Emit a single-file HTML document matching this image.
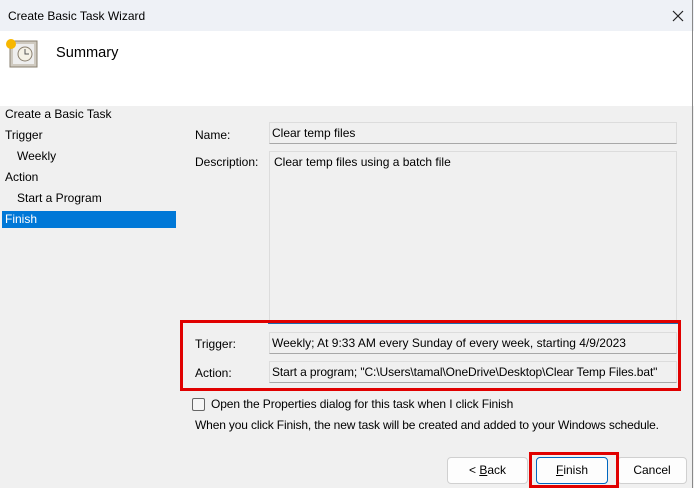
<!DOCTYPE html>
<html><head><style>
*{margin:0;padding:0;box-sizing:border-box}
body{width:694px;height:488px;overflow:hidden;background:#f0f0f0;font-family:"Liberation Sans",sans-serif;font-size:12px;color:#000;position:relative}
.a{position:absolute;white-space:nowrap}
.fld{position:absolute;background:#f0f0f0;border:1px solid #dcdcdc;border-bottom-color:#a8a8a8;padding:3px 2px;}
.btn{position:absolute;height:27px;background:#fdfdfd;border:1px solid #d0d0d0;border-radius:4px;text-align:center;line-height:25px}
</style></head><body>
<div class="a" style="left:0;top:0;width:694px;height:31px;background:#eef1f6"></div>
<div class="a" style="left:8px;top:9px;font-size:12px">Create Basic Task Wizard</div>
<svg class="a" style="left:671px;top:9px" width="14" height="14"><path d="M2 2L12 12M12 2L2 12" stroke="#222" stroke-width="1.2"/></svg>
<div class="a" style="left:0;top:31px;width:694px;height:75px;background:#fff"></div>
<svg class="a" style="left:4px;top:36px" width="34" height="34">
<rect x="6" y="5" width="27" height="26" fill="#cfcac0" stroke="#8a8070"/>
<rect x="9" y="8" width="21" height="20" fill="#eee" />
<circle cx="21" cy="18" r="7" fill="#f4f1e6" stroke="#8a8070"/>
<path d="M21 13v5h4" stroke="#555" fill="none"/>
<circle cx="7" cy="8" r="5" fill="#f7b700"/>
</svg>
<div class="a" style="left:56px;top:45px;font-size:14.6px">Summary</div>
<div class="a" style="left:692px;top:0;width:1px;height:488px;background:#888"></div>
<div class="a" style="left:5px;top:107px">Create a Basic Task</div>
<div class="a" style="left:5px;top:128px">Trigger</div>
<div class="a" style="left:17px;top:149px">Weekly</div>
<div class="a" style="left:5px;top:170px">Action</div>
<div class="a" style="left:17px;top:191px">Start a Program</div>
<div class="a" style="left:2px;top:211px;width:174px;height:17px;background:#0078d7"></div>
<div class="a" style="left:5px;top:212px;color:#fff">Finish</div>
<div class="a" style="left:195px;top:128px">Name:</div>
<div class="fld" style="left:269px;top:122px;width:408px;height:22px">Clear temp files</div>
<div class="a" style="left:195px;top:155px">Description:</div>
<div class="a" style="left:269px;top:151px;width:408px;height:172px;border:1px solid #dcdcdc;border-bottom:none;padding:3px 4px">Clear temp files using a batch file</div>
<div class="a" style="left:268px;top:322px;width:410px;height:2px;background:#1a6bb0"></div>
<div class="a" style="left:195px;top:337px">Trigger:</div>
<div class="fld" style="left:269px;top:332px;width:408px;height:22px">Weekly; At 9:33 AM every Sunday of every week, starting 4/9/2023</div>
<div class="a" style="left:195px;top:366px">Action:</div>
<div class="fld" style="left:269px;top:361px;width:408px;height:22px;letter-spacing:-0.1px">Start a program; "C:\Users\tamal\OneDrive\Desktop\Clear Temp Files.bat"</div>
<div class="a" style="left:180px;top:320px;width:501px;height:71px;border:3px solid #e00000"></div>
<div class="a" style="left:192px;top:398px;width:13px;height:13px;border:1px solid #666;border-radius:2px;background:#f6f6f6"></div>
<div class="a" style="left:211px;top:397px;letter-spacing:-0.1px">Open the Properties dialog for this task when I click Finish</div>
<div class="a" style="left:195px;top:418px;letter-spacing:-0.15px">When you click Finish, the new task will be created and added to your Windows schedule.</div>
<div class="btn" style="left:447px;top:457px;width:81px">&lt; <u>B</u>ack</div>
<div class="btn" style="left:536px;top:457px;width:72px;border-color:#0067c0"><u>F</u>inish</div>
<div class="btn" style="left:617px;top:457px;width:70px">Cancel</div>
<div class="a" style="left:529px;top:452px;width:90px;height:36px;border:3px solid #e00000"></div>
</body></html>
